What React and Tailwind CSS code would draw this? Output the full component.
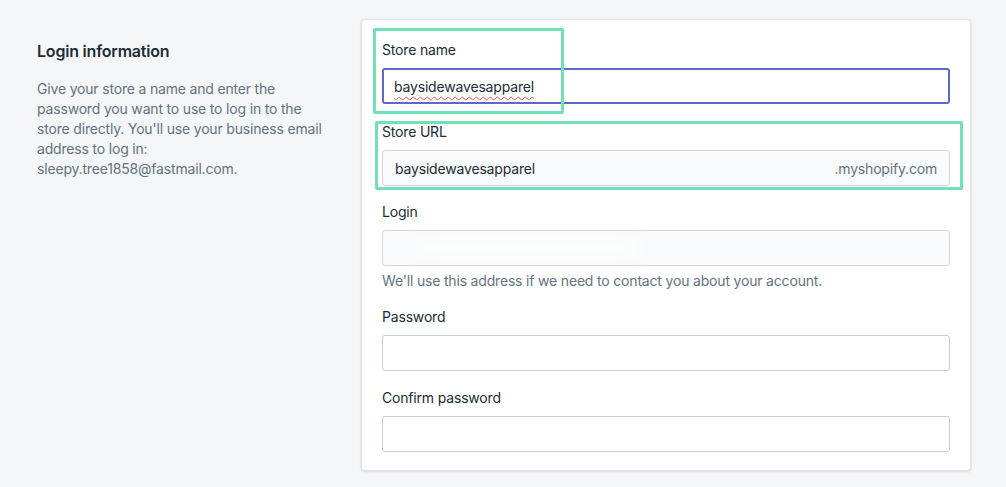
import React from 'react';

const Label = ({ children }) => (
  <div className="text-[14px] leading-5 text-[#212b36] mb-2">{children}</div>
);

const App = () => {
  return (
    <div className="w-[1006px] h-[487px] bg-[#f4f6f8] font-['Inter',sans-serif] tracking-[-0.18px] flex pt-[19px] pl-[37px] overflow-hidden">
      {/* description column */}
      <div className="w-[324px] pt-[20px] pr-[30px]">
        <h2 className="text-[16px] leading-6 font-semibold text-[#212b36] tracking-[-0.2px]">
          Login information
        </h2>
        <p className="mt-[16px] text-[14px] leading-5 text-[#637381]">
          Give your store a name and enter the password you want to use to log
          in to the store directly. You'll use your business email address to
          log in: sleepy.tree1858@fastmail.com.
        </p>
      </div>

      {/* form card */}
      <div className="relative w-[610px] h-[452px] bg-white border border-[#e1e4e8] rounded-[4px] shadow-[0_0_0_1px_rgba(63,63,68,0.03),0_1px_3px_rgba(63,63,68,0.12)] px-5 pt-5 pb-5">
        <div>
          <Label>Store name</Label>
          <div className="h-9 border-2 border-[#5c6ac4] rounded-[3px] flex items-center px-[10px] text-[14px] text-[#212b36]">
            <span className="underline decoration-wavy decoration-[#e35b5b] decoration-1 underline-offset-4">
              baysidewavesapparel
            </span>
          </div>
        </div>

        <div className="mt-[18px]">
          <Label>Store URL</Label>
          <div className="h-9 border border-[#d3d7db] bg-[#f9fafb] rounded-[3px] flex items-center justify-between px-3 text-[14px]">
            <span className="text-[#212b36]">baysidewavesapparel</span>
            <span className="text-[#637381]">.myshopify.com</span>
          </div>
        </div>

        <div className="mt-4">
          <Label>Login</Label>
          <div className="h-9 border border-[#d3d7db] bg-[#f9fafb] rounded-[3px] flex items-center px-3">
            <div className="ml-4 w-[230px] h-4 bg-white/80 blur-sm rounded-full" />
          </div>
          <div className="mt-[5px] text-[14px] leading-5 text-[#637381]">
            We'll use this address if we need to contact you about your account.
          </div>
        </div>

        <div className="mt-4">
          <Label>Password</Label>
          <div className="h-9 border border-[#c4cdd5] bg-white rounded-[3px]" />
        </div>

        <div className="mt-[17px]">
          <Label>Confirm password</Label>
          <div className="h-9 border border-[#c4cdd5] bg-white rounded-[3px]" />
        </div>

        {/* highlight overlays */}
        <div className="absolute left-[11px] top-[8px] w-[191px] h-[86px] border-[3px] border-[#72e0b6] rounded-[2px] pointer-events-none" />
        <div className="absolute left-[13px] top-[101px] w-[588px] h-[69px] border-[3px] border-[#72e0b6] rounded-[2px] pointer-events-none" />
      </div>
    </div>
  );
};

export default App;
